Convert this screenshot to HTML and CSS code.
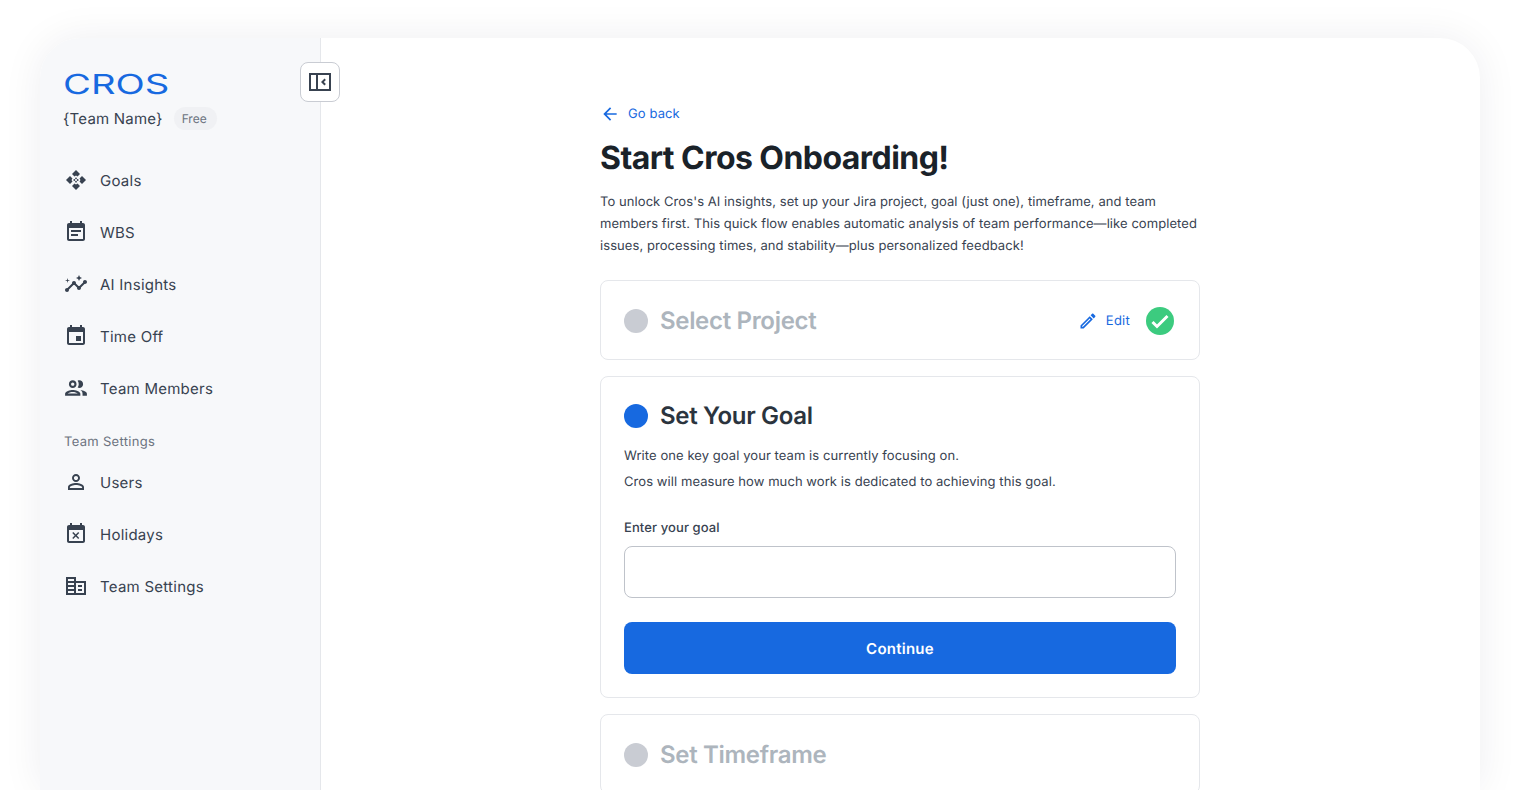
FILE: index.html
```html
<!DOCTYPE html>
<html lang="en">
<head>
    <meta charset="UTF-8">
    <meta name="viewport" content="width=device-width, initial-scale=1.0">
    <title>Cros Onboarding</title>
    <link rel="stylesheet" href="styles.css">
</head>
<body>
    <div class="shell">
        <aside class="sidebar">
            <div class="logo-row"><span class="logo">CROS</span></div>
            <div class="team-row">
                <span class="team-name">{Team Name}</span>
                <span class="plan-badge">Free</span>
            </div>
            <button class="collapse-btn">
                <svg width="24" height="24" viewBox="0 0 24 24"><path fill-rule="evenodd" d="M1 3h22v18H1zM3 5v14h5V5zm7 0v14h11V5z"/><path d="M16.500 8.500l1.400 1.400-2.100 2.100 2.100 2.100-1.400 1.400-3.500-3.500z"/></svg>
            </button>

            <nav class="nav">
                <a class="nav-item">
                    <svg class="nav-icon" viewBox="0 0 24 24"><path d="M12 2l4 4-2.500 2.500L12 7.500l-1.500 1L8 6zM6 8l2.500 2.500-1 1.500 1 1.500L6 16l-4-4zM18 8l4 4-4 4-2.500-2.500 1-1.500-1-1.500zM10.500 15.500l1.500 1 1.500-1L16 18l-4 4-4-4z"/><circle cx="12" cy="10.300" r="0.900"/><circle cx="10.300" cy="12" r="0.900"/><circle cx="13.700" cy="12" r="0.900"/><circle cx="12" cy="13.700" r="0.900"/></svg>
                    Goals
                </a>
                <a class="nav-item">
                    <svg class="nav-icon" viewBox="0 0 24 24"><path d="M17 10H7v2h10v-2zm2-7h-1V1h-2v2H8V1H6v2H5c-1.110 0-1.990.9-1.990 2L3 19c0 1.100.89 2 2 2h14c1.100 0 2-.9 2-2V5c0-1.100-.9-2-2-2zm0 16H5V8h14v11zm-5-5H7v2h7v-2z"/></svg>
                    WBS
                </a>
                <a class="nav-item">
                    <svg class="nav-icon" viewBox="0 0 24 24"><path d="M21 8c-1.450 0-2.260 1.440-1.930 2.510l-3.550 3.560c-.3-.09-.74-.09-1.040 0l-2.550-2.550C12.270 10.450 11.460 9 10 9c-1.450 0-2.270 1.440-1.930 2.520l-4.560 4.550C2.440 15.740 1 16.550 1 18c0 1.100.9 2 2 2 1.450 0 2.260-1.440 1.930-2.510l4.550-4.560c.3.09.74.09 1.040 0l2.550 2.550C12.730 16.550 13.540 18 15 18c1.450 0 2.270-1.440 1.930-2.520l3.560-3.550c1.070.33 2.510-.48 2.510-1.930 0-1.100-.9-2-2-2z"/><path d="M15 9l.94-2.070L18 6l-2.060-.93L15 3l-.92 2.070L12 6l2.080.93zM3.500 11L4 9l2-.5L4 8l-.5-2L3 8l-2 .5L3 9z"/></svg>
                    AI Insights
                </a>
                <a class="nav-item">
                    <svg class="nav-icon" viewBox="0 0 24 24"><path d="M17 12h-5v5h5v-5zM16 1v2H8V1H6v2H5c-1.110 0-1.990.9-1.990 2L3 19c0 1.100.89 2 2 2h14c1.100 0 2-.9 2-2V5c0-1.100-.9-2-2-2h-1V1h-2zm3 18H5V8h14v11z"/></svg>
                    Time Off
                </a>
                <a class="nav-item">
                    <svg class="nav-icon" viewBox="1 1 22 22"><path d="M9 13.750c-2.340 0-7 1.170-7 3.500V19h14v-1.750c0-2.330-4.660-3.500-7-3.500zM4.340 17c.84-.58 2.870-1.250 4.660-1.250s3.820.67 4.660 1.250H4.340zM9 12c1.930 0 3.500-1.570 3.500-3.500S10.930 5 9 5 5.500 6.570 5.500 8.500 7.070 12 9 12zm0-5c.83 0 1.500.67 1.500 1.500S9.830 10 9 10s-1.500-.67-1.500-1.500S8.170 7 9 7zm7.040 6.810c1.160.84 1.960 1.960 1.960 3.440V19h4v-1.750c0-2.020-3.500-3.170-5.960-3.440zM15 12c1.930 0 3.500-1.570 3.500-3.500S16.930 5 15 5c-.54 0-1.040.13-1.500.35.63.89 1 1.980 1 3.150s-.37 2.260-1 3.150c.46.22.96.35 1.500.35z"/></svg>
                    Team Members
                </a>

                <div class="nav-label">Team Settings</div>

                <a class="nav-item">
                    <svg class="nav-icon" viewBox="0 0 24 24"><path d="M12 5.900c1.160 0 2.100.94 2.100 2.100s-.94 2.100-2.100 2.100S9.900 9.160 9.900 8s.94-2.100 2.100-2.100m0 9c2.970 0 6.100 1.460 6.100 2.100v1.100H5.900V17c0-.64 3.130-2.100 6.100-2.100M12 4C9.790 4 8 5.790 8 8s1.790 4 4 4 4-1.790 4-4-1.790-4-4-4zm0 9c-2.670 0-8 1.340-8 4v3h16v-3c0-2.660-5.330-4-8-4z"/></svg>
                    Users
                </a>
                <a class="nav-item">
                    <svg class="nav-icon" viewBox="0 0 24 24"><path d="M9.310 17l2.440-2.440L14.190 17l1.060-1.060-2.440-2.440 2.440-2.440L14.190 10l-2.440 2.440L9.310 10l-1.060 1.060 2.440 2.440-2.440 2.440L9.310 17zM19 3h-1V1h-2v2H8V1H6v2H5c-1.110 0-1.990.9-1.990 2L3 19c0 1.100.89 2 2 2h14c1.100 0 2-.9 2-2V5c0-1.100-.9-2-2-2zm0 16H5V8h14v11z"/></svg>
                    Holidays
                </a>
                <a class="nav-item">
                    <svg class="nav-icon" viewBox="0 0 24 24"><path fill-rule="evenodd" d="M2 3h10v4h10v14H2zM4 5v2h6V5zM4 9v2h6V9zM4 13v2h6v-2zM4 17v2h6v-2zM12 9v10h8V9zM14 11h4v2h-4zM14 15h4v2h-4z"/></svg>
                    Team Settings
                </a>
            </nav>
        </aside>

        <main class="content">
            <div class="column">
                <a class="back-link">
                    <svg width="20" height="20" viewBox="0 0 24 24"><path d="M20 11H7.830l5.590-5.590L12 4l-8 8 8 8 1.410-1.410L7.830 13H20v-2z"/></svg>
                    Go back
                </a>
                <h1>Start Cros Onboarding!</h1>
                <p class="intro">To unlock Cros's AI insights, set up your Jira project, goal (just one), timeframe, and team members first. This quick flow enables automatic analysis of team performance—like completed issues, processing times, and stability—plus personalized feedback!</p>

                <section class="step-card step-row">
                    <span class="dot"></span>
                    <h2 class="step-title muted">Select Project</h2>
                    <a class="edit-link">
                        <svg width="20" height="20" viewBox="0 0 24 24"><path d="M14.060 9.020l.92.92L5.920 19H5v-.92l9.060-9.060M17.660 3c-.25 0-.51.1-.7.29l-1.830 1.830 3.750 3.750 1.830-1.830c.39-.39.39-1.020 0-1.410l-2.340-2.340c-.2-.2-.45-.29-.71-.29zm-3.600 3.190L3 17.250V21h3.750L17.810 9.940l-3.750-3.750z"/></svg>
                        <span class="edit-text">Edit</span>
                    </a>
                    <svg class="check" width="28" height="28" viewBox="0 0 28 28"><circle cx="14" cy="14" r="14"/><path d="M6.500 15l4.500 4.500L21.500 9"/></svg>
                </section>

                <section class="step-card">
                    <div class="step-head">
                        <span class="dot dot-active"></span>
                        <h2 class="step-title">Set Your Goal</h2>
                    </div>
                    <p class="step-text">Write one key goal your team is currently focusing on.</p>
                    <p class="step-text">Cros will measure how much work is dedicated to achieving this goal.</p>
                    <label class="field-label" for="goal">Enter your goal</label>
                    <input class="field-input" id="goal" type="text">
                    <button class="continue-btn">Continue</button>
                </section>

                <section class="step-card step-row">
                    <span class="dot"></span>
                    <h2 class="step-title muted">Set Timeframe</h2>
                </section>
            </div>
        </main>
    </div>
</body>
</html>
```

FILE: styles.css
```css
* {
    box-sizing: border-box;
}
html, body {
    height: 100%;
}
body {
    margin: 0;
    overflow: hidden;
    background: white;
    font-family: Inter, sans-serif;
    text-rendering: geometricPrecision;
    color: #1a2229;
    padding: 38px 40px 0;
}
.shell {
    position: relative;
    display: flex;
    width: 100%;
    height: 752px;
    background: white;
    border-radius: 40px 40px 0 0;
    box-shadow: 0px 0px 40px rgba(20, 30, 50, 0.07);
}
.sidebar {
    width: 281px;
    flex-shrink: 0;
    background: #f7f8fa;
    border-right: 1px solid #e5e7eb;
    border-radius: 40px 0 0 0;
    padding: 34px 24px 0;
}
.logo-row {
    height: 24px;
    line-height: 24px;
}
.logo {
    display: inline-block;
    margin-left: -1px;
    font-size: 27.500px;
    font-weight: 400;
    color: #1769e0;
    transform: scaleX(1.390);
    transform-origin: left center;
}
.team-row {
    display: flex;
    align-items: center;
    gap: 11px;
    margin-top: 10px;
    height: 24px;
}
.team-name {
    font-size: 15px;
    letter-spacing: 0.2px;
    margin-left: -1px;
    color: #384250;
}
.plan-badge {
    font-size: 12px;
    color: #6c737f;
    background: #f0f1f4;
    padding: 4px 10px 4px 8px;
    border-radius: 12px;
}
.collapse-btn {
    position: absolute;
    left: 260px;
    top: 24px;
    width: 40px;
    height: 40px;
    display: flex;
    align-items: center;
    justify-content: center;
    background: white;
    border: 1px solid #c9ccd3;
    border-radius: 8px;
    padding: 0;
}
.collapse-btn svg {
    fill: #384250;
}
.nav {
    margin-top: 24px;
}
.nav-item {
    display: flex;
    align-items: center;
    gap: 12px;
    height: 52px;
    font-size: 15px;
    letter-spacing: 0.25px;
    color: #384250;
}
.nav-icon {
    width: 24px;
    height: 24px;
    fill: #384250;
}
.nav-label {
    font-size: 13px;
    letter-spacing: 0.3px;
    color: #6c737f;
    margin-top: 18px;
    margin-bottom: 4px;
    height: 20px;
    line-height: 20px;
}
.content {
    flex: 1;
    display: flex;
    padding-left: 279px;
    overflow: hidden;
}
.column {
    width: 600px;
    padding-top: 65px;
}
.back-link {
    display: flex;
    align-items: center;
    gap: 8px;
    font-size: 13px;
    letter-spacing: 0.1px;
    height: 22px;
    color: #1769e0;
}
.back-link svg, .edit-link svg {
    fill: #1769e0;
}
h1 {
    font-size: 32px;
    line-height: 40px;
    font-weight: 700;
    letter-spacing: -0.55px;
    margin: 13px 0 13px;
    color: #1a2229;
}
.intro {
    font-size: 13px;
    letter-spacing: 0.07px;
    line-height: 22px;
    margin: 0 0 23px;
    color: #384250;
}
.step-card {
    border: 1px solid #e5e7eb;
    border-radius: 8px;
    padding: 24px 23px 23px;
    margin-bottom: 16px;
    background: white;
}
.step-row {
    display: flex;
    align-items: center;
    height: 80px;
}
.step-head {
    display: flex;
    align-items: center;
    height: 30px;
    margin-bottom: 12px;
}
.dot {
    width: 24px;
    height: 24px;
    border-radius: 50%;
    background: #c9ccd3;
    margin-right: 12px;
    flex-shrink: 0;
}
.dot-active {
    background: #1769e0;
}
.step-title {
    font-size: 24px;
    line-height: 30px;
    font-weight: 600;
    letter-spacing: -0.32px;
    padding-top: 0;
    margin: 0;
    color: #2b343e;
}
.step-title.muted {
    color: #adb5bd;
}
.edit-link {
    display: flex;
    align-items: center;
    gap: 8px;
    margin-left: auto;
    font-size: 13px;
    letter-spacing: 0.25px;
    color: #1769e0;
}
.edit-text {
    padding-top: 1px;
}
.check {
    margin-left: 16px;
    margin-right: 2px;
}
.check circle {
    fill: #3ccb7f;
}
.check path {
    fill: none;
    stroke: white;
    stroke-width: 3;
}
.step-text {
    font-size: 13px;
    letter-spacing: 0.07px;
    line-height: 26px;
    margin: 0;
    color: #384250;
}
.field-label {
    display: block;
    font-size: 13px;
    font-weight: 500;
    letter-spacing: 0.1px;
    line-height: 20px;
    margin-top: 23px;
    margin-bottom: 8px;
    color: #384250;
}
.field-input {
    display: block;
    width: 100%;
    height: 52px;
    border: 1px solid #bfc3ca;
    border-radius: 8px;
    outline: none;
}
.continue-btn {
    display: block;
    width: 100%;
    height: 52px;
    margin-top: 24px;
    background: #1769e0;
    color: white;
    border: none;
    border-radius: 8px;
    font-family: Inter, sans-serif;
    text-rendering: geometricPrecision;
    font-size: 15px;
    font-weight: 600;
    letter-spacing: 0.25px;
}
```
